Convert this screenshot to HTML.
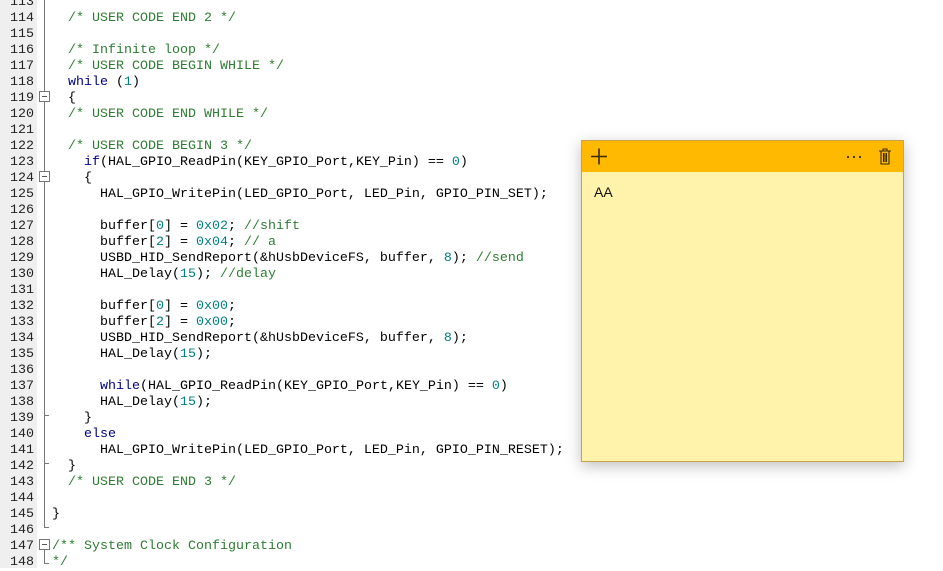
<!DOCTYPE html>
<html><head><meta charset="utf-8"><style>
body{margin:0;width:943px;height:568px;overflow:hidden;background:#fff;position:relative;font-family:"Liberation Mono",monospace;font-size:13.33px}
#g{position:absolute;left:0;top:0;width:37px;height:568px;background:#efefef}
pre{margin:0;position:absolute;top:-5px;line-height:16px;font-family:"Liberation Mono",monospace;font-size:13.33px;color:#000}
#nums{left:0;width:34px;text-align:right;color:#222}
#code{left:52px}
.c{color:#2e7d32}.k{color:#00008b}.n{color:#008080}
.fl{position:absolute;left:44px;width:1px;background:#777}
.bx{position:absolute;left:39px;width:9px;height:9px;border:1px solid #777;background:#fff}
.bx:after{content:"";position:absolute;left:2px;top:4px;width:5px;height:1px;background:#555}
.tk{position:absolute;left:44px;width:5px;height:1px;background:#777}
#note{position:absolute;left:581px;top:140px;width:321px;height:320px;background:#fff2ab;border:1px solid #c9a24a;box-shadow:0 4px 14px rgba(0,0,0,.25);font-family:"Liberation Sans",sans-serif}
#hd{height:31px;background:#ffb900}
</style></head><body>
<div id="g"></div>
<pre id="nums">
113
114
115
116
117
118
119
120
121
122
123
124
125
126
127
128
129
130
131
132
133
134
135
136
137
138
139
140
141
142
143
144
145
146
147
148</pre>
<div class="fl" style="top:0;height:528px"></div>
<div class="tk" style="top:527px"></div>
<div class="bx" style="top:91px"></div>
<div class="bx" style="top:171px"></div>
<div class="tk" style="top:415px"></div>
<div class="tk" style="top:463px"></div>
<div class="fl" style="top:549px;height:15px"></div>
<div class="tk" style="top:563px"></div>
<div class="bx" style="top:539px;background:#fff"></div>
<pre id="code">

  <span class="c">/* USER CODE END 2 */</span>

  <span class="c">/* Infinite loop */</span>
  <span class="c">/* USER CODE BEGIN WHILE */</span>
  <span class="k">while</span> (<span class="n">1</span>)
  {
  <span class="c">/* USER CODE END WHILE */</span>

  <span class="c">/* USER CODE BEGIN 3 */</span>
    <span class="k">if</span>(HAL_GPIO_ReadPin(KEY_GPIO_Port,KEY_Pin) == <span class="n">0</span>)
    {
      HAL_GPIO_WritePin(LED_GPIO_Port, LED_Pin, GPIO_PIN_SET);

      buffer[<span class="n">0</span>] = <span class="n">0x02</span>; <span class="c">//shift</span>
      buffer[<span class="n">2</span>] = <span class="n">0x04</span>; <span class="c">// a</span>
      USBD_HID_SendReport(&amp;hUsbDeviceFS, buffer, <span class="n">8</span>); <span class="c">//send</span>
      HAL_Delay(<span class="n">15</span>); <span class="c">//delay</span>

      buffer[<span class="n">0</span>] = <span class="n">0x00</span>;
      buffer[<span class="n">2</span>] = <span class="n">0x00</span>;
      USBD_HID_SendReport(&amp;hUsbDeviceFS, buffer, <span class="n">8</span>);
      HAL_Delay(<span class="n">15</span>);

      <span class="k">while</span>(HAL_GPIO_ReadPin(KEY_GPIO_Port,KEY_Pin) == <span class="n">0</span>)
      HAL_Delay(<span class="n">15</span>);
    }
    <span class="k">else</span>
      HAL_GPIO_WritePin(LED_GPIO_Port, LED_Pin, GPIO_PIN_RESET);
  }
  <span class="c">/* USER CODE END 3 */</span>

}

<span class="c">/** System Clock Configuration</span>
<span class="c">*/</span></pre>
<div id="note">
<div id="hd">
<svg width="321" height="31" style="display:block">
<path d="M9 15.5h16M17 7.5v16" stroke="#3a2a00" stroke-width="1.6" fill="none"/>
<circle cx="266" cy="16" r="1.1" fill="#3a2a00"/><circle cx="272" cy="16" r="1.1" fill="#3a2a00"/><circle cx="278" cy="16" r="1.1" fill="#3a2a00"/>
<path d="M297 10h12M301 10v-2h4v2M299 10v13h8v-13M301.5 12v9M303 12v9M304.5 12v9" stroke="#3a2a00" stroke-width="1.1" fill="none"/>
</svg></div>
<div style="position:absolute;left:12px;top:43px;font-size:14px;color:#111">AA</div>
</div>
</body></html>
